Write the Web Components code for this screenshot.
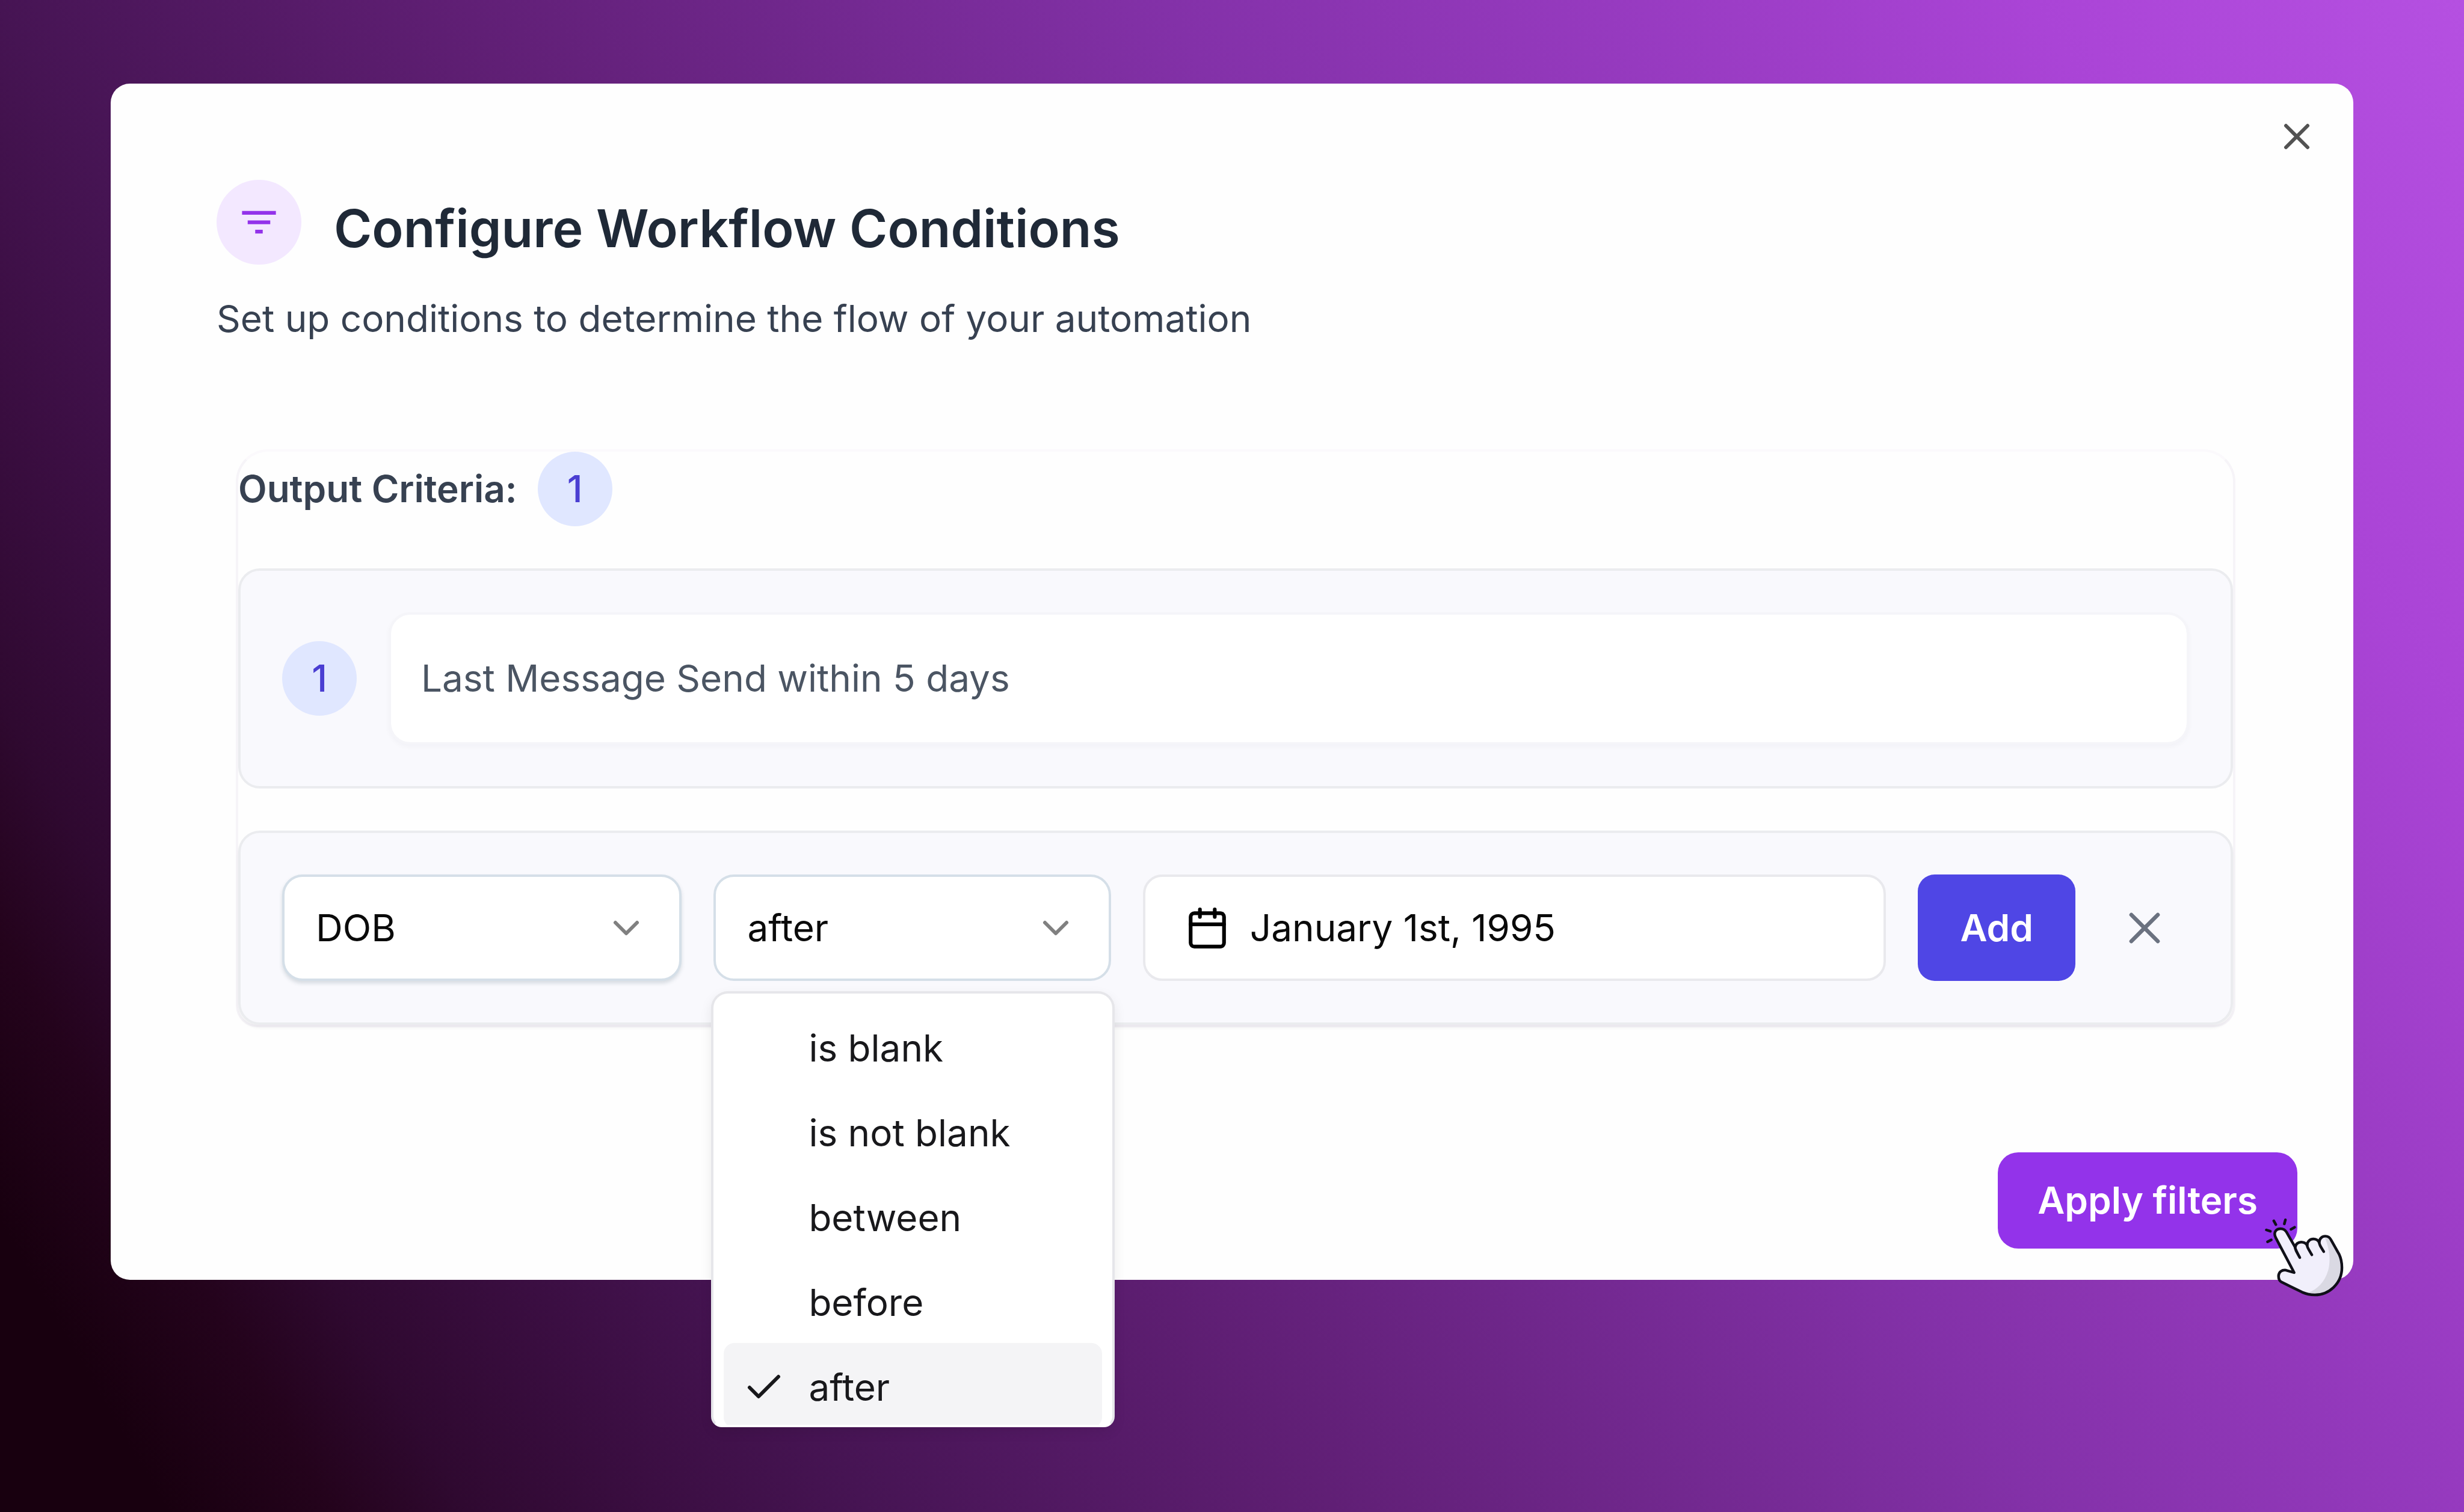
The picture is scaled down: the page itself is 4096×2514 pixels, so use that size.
<!DOCTYPE html>
<html lang="en">
<head>
<meta charset="utf-8">
<title>Configure Workflow Conditions</title>
<style>
  html { min-height: 100%; background: #18000f; }
  body {
    margin: 0;
    min-height: 100vh;
    font: 400 62px/88px Inter, "Liberation Sans", sans-serif;
    color: #0a0a0a;
    background: linear-gradient(60deg, #18000f 0%, #18000f 5%, #24031c 10%, #2f0930 14%, #3b0e42 20%, #461453 26%, #601f75 40%, #8331a8 61%, #963abf 74%, #aa44d6 87%, #b550e1 100%);
  }
</style>
</head>
<body>
<workflow-dialog>
  <dialog-heading slot="heading">
    Configure Workflow Conditions
    <span slot="description">Set up conditions to determine the flow of your automation</span>
  </dialog-heading>
  <criteria-panel count="1">
    <span slot="label">Output Criteria:</span>
    <criteria-row>
      <count-badge>1</count-badge>
      <condition-text>Last Message Send within 5 days</condition-text>
    </criteria-row>
    <condition-editor></condition-editor>
  </criteria-panel>
  <apply-button slot="footer">Apply filters</apply-button>
</workflow-dialog>

<script>
const define = (name, html, setup) => {
  const template = document.createElement('template');
  template.innerHTML = html;
  customElements.define(name, class extends HTMLElement {
    constructor() {
      super();
      this.attachShadow({ mode: 'open' }).append(template.content.cloneNode(true));
    }
    connectedCallback() { if (setup) setup(this, this.shadowRoot); }
  });
};

define('workflow-dialog', `
  <style>
    :host { display: block; padding: 139px 184px; }
    section { box-sizing: border-box; display: flex; flex-direction: column; padding: 52px 58px 52px 176px; border-radius: 32px; background: #fefefe; }
    .close { align-self: flex-end; width: 72px; height: 72px; margin: 0 0 36px; padding: 0; border: 0; background: none; color: #525252; cursor: pointer; }
    .close svg { display: block; width: 72px; height: 72px; }
    .body { margin: 173px 138px 208px 32px; }
    footer { display: flex; justify-content: flex-end; padding-right: 35px; }
  </style>
  <section role="dialog" aria-label="Configure Workflow Conditions">
    <button class="close" type="button" aria-label="Close">
      <svg viewBox="0 0 24 24" fill="none" stroke="currentColor" stroke-width="2" stroke-linecap="round"><path d="M18 6 6 18M6 6l12 12"/></svg>
    </button>
    <slot name="heading"></slot>
    <div class="body"><slot></slot></div>
    <footer><slot name="footer"></slot></footer>
  </section>`);

define('dialog-heading', `
  <style>
    :host { display: flex; flex-direction: column; gap: 46px; }
    .row { display: flex; align-items: flex-end; gap: 54px; }
    .icon { display: grid; place-items: center; flex: none; width: 141px; height: 141px; border-radius: 50%; background: #f3e8ff; color: #9333ea; }
    .icon svg { width: 75px; height: 75px; }
    h1 { margin: 0; font-size: 86px; line-height: 120px; font-weight: 600; color: #1f2937; }
    p { margin: 0; color: #374151; }
  </style>
  <div class="row">
    <span class="icon"><svg viewBox="0 0 24 24" fill="currentColor"><path d="M10 18h4v-2h-4v2zM3 6v2h18V6H3zm3 7h12v-2H6v2z"/></svg></span>
    <h1><slot></slot></h1>
  </div>
  <p><slot name="description"></slot></p>`);

define('count-badge', `
  <style>
    :host { display: grid; place-items: center; flex: none; width: 124px; height: 124px; border-radius: 50%; background: #e0e7ff; color: #4a3ed2; font-weight: 500; }
  </style><slot></slot>`);

define('criteria-panel', `
  <style>
    :host { display: flex; flex-direction: column; gap: 70px; border: 4px solid #f6f4f8; border-top-color: #fbf9fc; border-radius: 54px 54px 36px 36px; }
    header { display: flex; align-items: center; gap: 34px; font-weight: 600; color: #374151; }
  </style>
  <header><slot name="label"></slot><count-badge></count-badge></header>
  <slot></slot>`, (el, root) => {
    root.querySelector('count-badge').textContent = el.getAttribute('count');
  });

define('criteria-row', `
  <style>
    :host { display: flex; align-items: center; gap: 53px; padding: 69px; border: 4px solid #ebecef; border-radius: 36px; background: #f9f9fd; }
  </style><slot></slot>`);

define('condition-text', `
  <style>
    :host { display: block; flex: 1; padding: 62px 50px; border: 4px solid #f5f5f9; border-radius: 36px; background: #fff; background-clip: padding-box; color: #4b5563; box-shadow: 0 4px 8px rgba(20, 20, 50, .03); }
  </style><slot></slot>`);

define('select-box', `
  <style>
    :host { display: grid; position: relative; }
    select, svg { grid-area: 1 / 1; }
    select { appearance: none; box-sizing: border-box; width: 100%; height: 177px; margin: 0; padding: 0 140px 0 52px; border: 4px solid #d5dfe8; border-radius: 34px; background: #fff; color: #0a0a0a; font: inherit; }
    :host([raised]) select { box-shadow: 0 4px 6px rgba(60, 90, 100, .18); }
    svg { align-self: center; justify-self: end; width: 72px; height: 72px; margin-right: 56px; color: #808080; pointer-events: none; }
  </style>
  <select></select>
  <svg viewBox="0 0 24 24" fill="none" stroke="currentColor" stroke-width="2" stroke-linecap="round" stroke-linejoin="round"><path d="m6 9 6 6 6-6"/></svg>
  <slot></slot>`, (el, root) => {
    const select = root.querySelector('select');
    select.setAttribute('aria-label', el.getAttribute('label'));
    select.add(new Option(el.getAttribute('value')));
  });

define('option-menu', `
  <style>
    :host { position: absolute; z-index: 2; top: calc(100% + 17px); left: -4px; right: -6px; box-sizing: border-box; max-height: 725px; overflow: hidden; padding: 17px; border: 4px solid #e6e6ea; border-bottom-color: #fff; border-radius: 28px 28px 18px 18px; background: #fff; box-shadow: 0 8px 20px rgba(0, 0, 0, .08); }
  </style><slot></slot>`, el => el.setAttribute('role', 'listbox'));

define('menu-option', `
  <style>
    :host { display: grid; grid-template-columns: 72px 1fr; align-items: center; gap: 38px; padding: 30px 31px 23px; border-radius: 18px; color: #18181b; }
    :host([selected]) { background: #f4f4f6; }
    svg { width: 72px; height: 72px; visibility: hidden; }
    :host([selected]) svg { visibility: visible; }
  </style>
  <svg viewBox="0 0 24 24" fill="none" stroke="currentColor" stroke-width="2" stroke-linecap="round" stroke-linejoin="round"><path d="M20 6 9 17l-5-5"/></svg>
  <span><slot></slot></span>`, el => {
    el.setAttribute('role', 'option');
    el.setAttribute('aria-selected', el.hasAttribute('selected'));
  });

define('condition-editor', `
  <style>
    :host { display: grid; grid-template-columns: 663fr 659fr 1233fr auto auto; align-items: center; gap: 53px; padding: 69px; border: 4px solid #ebecef; border-radius: 36px; background: #f9f9fd; box-shadow: 0 5px 5px rgba(20, 20, 40, .05); }
    button { box-sizing: border-box; height: 177px; margin: 0; border: 0; font: inherit; cursor: pointer; }
    .date { display: flex; align-items: center; gap: 34px; padding: 0 66px; border: 4px solid #e9e9ed; border-radius: 32px; background: #fff; color: #0a0a0a; }
    .date svg { width: 74px; height: 74px; color: #000; }
    .add { padding: 0 70px; border-radius: 28px; background: #4f46e5; color: #fff; font-weight: 600; }
    .remove { padding: 0 30px 0 18px; background: none; color: #6b7280; }
    .remove svg { display: block; width: 88px; height: 88px; }
  </style>
  <select-box raised label="Field" value="DOB"></select-box>
  <select-box label="Operator" value="after">
    <option-menu>
      <menu-option>is blank</menu-option>
      <menu-option>is not blank</menu-option>
      <menu-option>between</menu-option>
      <menu-option>before</menu-option>
      <menu-option selected>after</menu-option>
    </option-menu>
  </select-box>
  <button class="date" type="button">
    <svg viewBox="0 0 24 24" fill="none" stroke="currentColor" stroke-width="2" stroke-linecap="round" stroke-linejoin="round"><rect x="3" y="4" width="18" height="18" rx="2"/><path d="M8 2v4M16 2v4M3 10h18"/></svg>
    January 1st, 1995
  </button>
  <button class="add" type="button">Add</button>
  <button class="remove" type="button" aria-label="Remove condition">
    <svg viewBox="0 0 24 24" fill="none" stroke="currentColor" stroke-width="1.8" stroke-linecap="round"><path d="M18 6 6 18M6 6l12 12"/></svg>
  </button>`);

define('apply-button', `
  <style>
    :host { display: block; position: relative; }
    button { margin: 0; padding: 36px 66px; border: 0; border-radius: 34px; background: #9333ea; color: #fff; font: inherit; font-weight: 600; cursor: pointer; display: block; }
    svg { position: absolute; right: -80px; bottom: -83px; width: 139px; height: 136px; pointer-events: none; }
  </style>
  <button type="button"><slot></slot></button>
  <svg viewBox="200 90 560 550" fill="none" stroke="#101018" stroke-width="18" stroke-linecap="round" stroke-linejoin="round" aria-hidden="true">
    <defs>
      <path id="hand" d="M416 466 L292 231 C272 190 300 171 325 171 C343 171 355 178 364 193 L423 296 C425 272 445 261 463 261 C480 261 494 268 503 282 C504 254 525 240 545 240 C562 240 576 248 584 262 C586 236 604 221 625 221 C642 221 656 230 664 246 L718 342 C732 372 737 400 737 432 C737 540 650 616 555 616 C525 616 500 611 470 598 L330 529 C314 519 311 505 311 489 C312 460 335 446 362 450 Z"/>
      <clipPath id="inside"><use href="#hand"/></clipPath>
    </defs>
    <use href="#hand" fill="#f1effb" stroke="none"/>
    <path clip-path="url(#inside)" fill="#dad9e3" stroke="none" d="M618 220 C658 310 660 390 645 450 C622 530 570 580 508 602 L560 640 L760 620 L760 330 L664 200 Z"/>
    <use href="#hand"/>
    <path d="M421 290 C422 308 430 322 454 365 M503 276 C503 296 510 305 535 346 M584 258 C584 275 590 285 615 325"/>
    <path d="M229 179 256 188 M279 118 293 143 M357 111 350 138 M395 175 419 161 M237 259 262 246"/>
  </svg>`);
</script>
</body>
</html>
